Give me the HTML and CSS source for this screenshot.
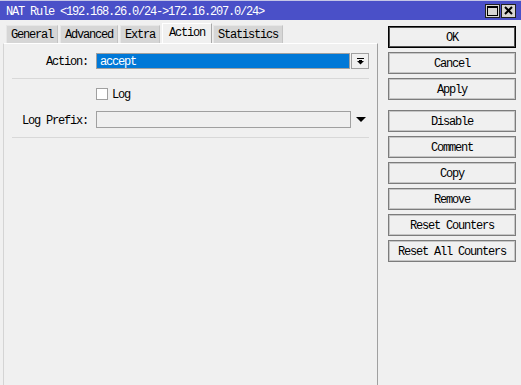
FILE: index.html
```html
<html lang="en">
<head>
  <meta charset="UTF-8" />
  <title>NAT Rule</title>
  <link rel="stylesheet" href="styles.css">
</head>
<body>
  <div class="window">
    <div class="titlebar">
      <span class="title">NAT Rule &lt;192.168.26.0/24-&gt;172.16.207.0/24&gt;</span>
      <div class="wincontrols">
        <span class="winbtn">
          <svg width="11" height="10" viewBox="0 0 11 10"><rect x="0.5" y="0.5" width="10" height="9" fill="none" stroke="#000"/><rect x="0" y="0" width="11" height="2" fill="#000"/></svg>
        </span>
        <span class="winbtn">
          <svg width="9" height="9" viewBox="0 0 9 9"><path d="M1 1 L8 8 M8 1 L1 8" stroke="#000" stroke-width="2"/></svg>
        </span>
      </div>
    </div>

    <div class="body">
      <div class="main">
        <div class="tabs">
          <div class="tab">General</div>
          <div class="tab">Advanced</div>
          <div class="tab">Extra</div>
          <div class="tab active">Action</div>
          <div class="tab">Statistics</div>
        </div>

        <div class="panel">
          <div class="row">
            <label class="label">Action:</label>
            <div class="field selected">accept</div>
            <div class="ddbtn">
              <svg width="7" height="7" viewBox="0 0 7 7"><rect x="0" y="0" width="7" height="1" fill="#000"/><rect x="2" y="2" width="3" height="1" fill="#000"/><path d="M0 3 L7 3 L3.5 6.5 Z" fill="#000"/></svg>
            </div>
          </div>
          <div class="sep"></div>

          <div class="row check-row">
            <span class="checkbox"></span>
            <span class="text">Log</span>
          </div>

          <div class="row prefix-row">
            <label class="label">Log Prefix:</label>
            <div class="field"></div>
            <svg class="arrow" width="10" height="5" viewBox="0 0 10 5"><path d="M0 0 L10 0 L5 5 Z" fill="#000"/></svg>
          </div>
          <div class="sep"></div>
        </div>
      </div>

      <div class="side">
        <button class="btn default">OK</button>
        <button class="btn">Cancel</button>
        <button class="btn">Apply</button>
        <button class="btn group">Disable</button>
        <button class="btn">Comment</button>
        <button class="btn">Copy</button>
        <button class="btn">Remove</button>
        <button class="btn">Reset Counters</button>
        <button class="btn">Reset All Counters</button>
      </div>
    </div>
  </div>
</body>
</html>
```

FILE: styles.css
```css
body {
  margin: 0;
  background: #f0f0f0;
  font-family: "Liberation Mono", "DejaVu Sans Mono", monospace;
  font-size: 12px;
  letter-spacing: -1.2px;
  color: #000;
}
.window {
  width: 521px;
  height: 385px;
  display: flex;
  flex-direction: column;
  overflow: hidden;
}
.titlebar {
  height: 20px;
  box-sizing: border-box;
  border-top: 1px solid #c4c6e6;
  background: #4a50c8;
  color: #fff;
  display: flex;
  align-items: center;
  justify-content: space-between;
  padding-left: 6px;
  padding-right: 5px;
}
.title {
  padding-top: 3px;
}
.wincontrols {
  display: flex;
  gap: 1px;
}
.winbtn {
  width: 15px;
  height: 14px;
  box-sizing: border-box;
  background: #d8d6d2;
  border: 1px solid #202020;
  display: flex;
  align-items: center;
  justify-content: center;
}
.body {
  flex: 1;
  display: flex;
}
.main {
  width: 378px;
  display: flex;
  flex-direction: column;
}
.tabs {
  display: flex;
  align-items: flex-end;
  gap: 2px;
  padding-left: 6px;
  height: 23px;
}
.tab {
  height: 18px;
  box-sizing: border-box;
  padding: 0 4px;
  background: #d6d6d6;
  border-top: 1px solid #e6e6e6;
  border-left: 1px solid #e6e6e6;
  border-right: 1px solid #c4c4c4;
  line-height: 19px;
}
.tab.active {
  height: 20px;
  width: 50px;
  padding: 0 6px;
  background: #f0f0f0;
  border-top: 1px solid #fff;
  border-left: 1px solid #fff;
  border-right: 1px solid #a8a8a8;
  margin-right: -1px;
  line-height: 19px;
}
.panel {
  flex: 1;
  margin-left: 3px;
  border-left: 1px solid #d4d4d4;
  border-right: 1px solid #a0a0a0;
  border-top: 1px solid #fff;
  padding-top: 9px;
}
.row {
  display: flex;
  align-items: center;
}
.label {
  width: 84px;
  text-align: right;
  margin-right: 8px;
  padding-top: 2px;
}
.text {
  padding-top: 2px;
}
.field {
  width: 254px;
  height: 16px;
  box-sizing: border-box;
  border: 1px solid #a0a0a0;
  padding-left: 3px;
  line-height: 16px;
}
.field.selected {
  background: #0078d7;
  color: #fff;
}
.ddbtn {
  width: 18px;
  height: 16px;
  box-sizing: border-box;
  margin-left: 1px;
  border: 1px solid #a0a0a0;
  display: flex;
  align-items: center;
  justify-content: center;
}
.sep {
  margin: 9px 0 0 8px;
  width: 357px;
  height: 1px;
  background: #d8d8d8;
}
.check-row {
  margin-top: 7px;
  padding-left: 92px;
  gap: 4px;
}
.checkbox {
  width: 12px;
  height: 12px;
  box-sizing: border-box;
  background: #fff;
  border: 1px solid #a0a0a0;
}
.prefix-row {
  margin-top: 9px;
}
.prefix-row .field {
  height: 17px;
  width: 255px;
}
.arrow {
  margin-left: 5px;
}
.side {
  padding: 6px 0 0 10px;
  display: flex;
  flex-direction: column;
  gap: 4px;
}
.btn {
  width: 128px;
  height: 22px;
  background: #f0f0f0;
  border: 1px solid #7c7c7c;
  box-shadow: inset 0 0 0 1px #c6c6c6;
  font-family: inherit;
  font-size: 12px;
  letter-spacing: -1.2px;
  padding: 2px 0 0;
  color: #000;
}
.btn.default {
  border-color: #000;
  box-shadow: inset 0 0 0 1px #505050;
}
.btn.group {
  margin-top: 6px;
}
```
